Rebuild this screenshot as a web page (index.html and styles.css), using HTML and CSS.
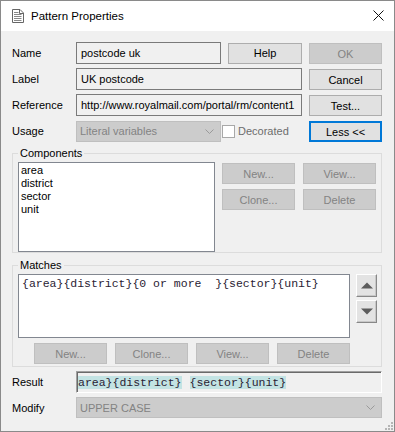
FILE: index.html
```html
<!DOCTYPE html>
<html>
<head>
<meta charset="utf-8">
<title>Pattern Properties</title>
<link rel="stylesheet" href="styles.css">
</head>
<body>
<div class="window">
  <div class="titlebar">
    <svg class="title-icon" width="12" height="14" viewBox="0 0 12 14">
      <path d="M0.5 0.5H8L11.5 4V13.5H0.5Z" fill="#fff" stroke="#666"/>
      <path d="M7.5 0.5V4.5H11.5" fill="none" stroke="#666"/>
      <path d="M2 3.5H6.5M2 5.5H9.5M2 7.5H9.5M2 9.5H9.5M2 11.5H9.5" stroke="#888"/>
    </svg>
    <span class="title">Pattern Properties</span>
    <svg class="close" width="11" height="11" viewBox="0 0 11 11">
      <path d="M0.5 0.5L10.5 10.5M10.5 0.5L0.5 10.5" stroke="#111" stroke-width="1"/>
    </svg>
  </div>

  <div class="content">
    <div class="row">
      <span class="lbl">Name</span>
      <div class="mid">
        <div class="edit name">postcode uk</div>
        <button class="btn help">Help</button>
      </div>
      <button class="btn side dis">OK</button>
    </div>
    <div class="row">
      <span class="lbl">Label</span>
      <div class="mid">
        <div class="edit">UK postcode</div>
      </div>
      <button class="btn side">Cancel</button>
    </div>
    <div class="row">
      <span class="lbl">Reference</span>
      <div class="mid">
        <div class="edit">http://www.royalmail.com/portal/rm/content1</div>
      </div>
      <button class="btn side">Test...</button>
    </div>
    <div class="row last">
      <span class="lbl">Usage</span>
      <div class="mid usage">
        <div class="combo short">
          <span class="combo-text">Literal variables</span>
          <svg class="chev" width="9" height="5" viewBox="0 0 9 5"><path d="M0.5 0.5L4.5 4.5L8.5 0.5" fill="none" stroke="#9a9a9a"/></svg>
        </div>
        <span class="chk"></span>
        <span class="chk-label">Decorated</span>
      </div>
      <button class="btn side def">Less &lt;&lt;</button>
    </div>

    <fieldset class="group components">
      <legend>Components</legend>
      <div class="comp-body">
        <div class="listbox">
          <div class="item">area</div>
          <div class="item">district</div>
          <div class="item">sector</div>
          <div class="item">unit</div>
        </div>
        <div class="comp-buttons">
          <button class="btn dis">New...</button>
          <button class="btn dis">View...</button>
          <button class="btn dis">Clone...</button>
          <button class="btn dis">Delete</button>
        </div>
      </div>
    </fieldset>

    <fieldset class="group matches">
      <legend>Matches</legend>
      <div class="match-body">
        <div class="memo">{area}{district}{0 or more  }{sector}{unit}</div>
        <div class="arrows">
          <button class="arrow"><svg width="12" height="7" viewBox="0 0 12 7"><path d="M0 6.5L6 0.5L12 6.5Z" fill="#5c5c5c"/></svg></button>
          <button class="arrow"><svg width="12" height="7" viewBox="0 0 12 7"><path d="M0 0.5L6 6.5L12 0.5Z" fill="#5c5c5c"/></svg></button>
        </div>
      </div>
      <div class="match-buttons">
        <button class="btn dis">New...</button>
        <button class="btn dis">Clone...</button>
        <button class="btn dis">View...</button>
        <button class="btn dis">Delete</button>
      </div>
    </fieldset>

    <div class="row result-row">
      <span class="lbl">Result</span>
      <div class="result">
        <div class="result-inner"><span class="hl">area}{district}</span><span class="hl second">{sector}{unit}</span></div>
      </div>
    </div>
    <div class="row modify-row">
      <span class="lbl">Modify</span>
      <div class="combo wide">
        <span class="combo-text">UPPER CASE</span>
        <svg class="chev" width="9" height="5" viewBox="0 0 9 5"><path d="M0.5 0.5L4.5 4.5L8.5 0.5" fill="none" stroke="#9a9a9a"/></svg>
      </div>
    </div>
  </div>

  <svg class="grip" width="9" height="9" viewBox="0 0 9 9">
    <rect x="7" y="1" width="2" height="2" fill="#b5b5b5"/>
    <rect x="4" y="4" width="2" height="2" fill="#b5b5b5"/>
    <rect x="7" y="4" width="2" height="2" fill="#b5b5b5"/>
    <rect x="1" y="7" width="2" height="2" fill="#b5b5b5"/>
    <rect x="4" y="7" width="2" height="2" fill="#b5b5b5"/>
    <rect x="7" y="7" width="2" height="2" fill="#b5b5b5"/>
  </svg>
</div>
</body>
</html>
```

FILE: styles.css
```css
html, body {
  margin: 0;
  padding: 0;
  background: #f0f0f0;
}

.window {
  position: relative;
  width: 395px;
  height: 432px;
  box-sizing: border-box;
  border: 1px solid #8a8a8a;
  background: #f0f0f0;
  font-family: "Liberation Sans", Arial, sans-serif;
  font-size: 11px;
  color: #000;
  overflow: hidden;
}

.titlebar {
  height: 30px;
  background: #fff;
  display: flex;
  align-items: center;
  padding-left: 11px;
}

.title-icon {
  margin-right: 7px;
  margin-top: -1px;
}

.title {
  flex: 1;
  font-size: 11.5px;
  color: #000;
}

.close {
  margin-right: 10px;
  margin-top: -1px;
}

.content {
  padding: 11px 12px 0 11px;
}

.row {
  display: flex;
  align-items: center;
  height: 22px;
  margin-bottom: 4px;
}

.row.last {
  margin-bottom: 0;
}

.lbl {
  width: 64px;
  flex: none;
}

.mid {
  width: 226px;
  flex: none;
  display: flex;
  align-items: center;
  gap: 7px;
  margin-right: 7px;
}

.edit {
  flex: 1;
  min-width: 0;
  height: 22px;
  box-sizing: border-box;
  border: 1px solid #7a7a7a;
  background: #f0f0f0;
  padding: 0 4px;
  line-height: 20px;
  white-space: nowrap;
  overflow: hidden;
}

.edit.name {
  flex: none;
  width: 145px;
}

.btn {
  width: 73px;
  height: 21px;
  box-sizing: border-box;
  border: 1px solid #adadad;
  background: #e1e1e1;
  font-family: inherit;
  font-size: 11px;
  color: #000;
  padding: 0;
  margin: 0;
  flex: none;
}

.btn.help {
  width: 74px;
}

.btn.side {
  margin-top: 1px;
}

.btn.dis {
  background: #cccccc;
  border-color: #bfbfbf;
  color: #838383;
}

.btn.def {
  border: 2px solid #0078d7;
}

.usage {
  gap: 0;
}

.combo {
  height: 21px;
  box-sizing: border-box;
  border: 1px solid #bfbfbf;
  background: #cccccc;
  display: flex;
  align-items: center;
  padding: 0 6px 0 3px;
  color: #838383;
}

.combo.short {
  width: 145px;
  flex: none;
}

.combo.wide {
  flex: 1;
}

.combo-text {
  flex: 1;
  white-space: nowrap;
}

.chk {
  width: 13px;
  height: 13px;
  box-sizing: border-box;
  border: 1px solid #a8a8a8;
  background: #fff;
  margin-left: 1px;
  flex: none;
}

.chk-label {
  margin-left: 3px;
  color: #6d6d6d;
  white-space: nowrap;
}

.group {
  margin: 4px 0 0;
  padding: 2px 5px 0 5px;
  border: 1px solid #dcdcdc;
  min-width: 0;
}

.group legend {
  padding: 0 2px;
  line-height: 14px;
}

.comp-body {
  display: flex;
  gap: 7px;
}

.listbox {
  width: 197px;
  height: 90px;
  box-sizing: border-box;
  border: 1px solid #828790;
  background: #fff;
  padding: 1px 2px;
  flex: none;
}

.item {
  line-height: 13px;
}

.comp-buttons {
  display: grid;
  grid-template-columns: 73px 73px;
  grid-auto-rows: 21px;
  column-gap: 8px;
  row-gap: 5px;
  align-content: start;
  margin-top: 1px;
}

.matches {
  margin-top: 5px;
  padding-right: 4px;
  padding-bottom: 2px;
}

.match-body {
  display: flex;
}

.memo {
  width: 332px;
  height: 64px;
  box-sizing: border-box;
  border: 1px solid #828790;
  background: #fff;
  padding: 2px 3px;
  font-family: "Liberation Mono", "Courier New", monospace;
  font-size: 11.5px;
  line-height: 14px;
  white-space: pre;
  color: #2a2233;
  flex: none;
}

.arrows {
  display: flex;
  flex-direction: column;
  gap: 3px;
  margin-left: 6px;
}

.arrow {
  width: 21px;
  height: 23px;
  box-sizing: border-box;
  padding: 0;
  margin: 0;
  background: #e3e3e3;
  border: 1px solid;
  border-color: #fff #888 #888 #fff;
  box-shadow: inset -1px -1px 0 #c8c8c8;
  display: flex;
  align-items: center;
  justify-content: center;
}

.match-buttons {
  width: 332px;
  display: flex;
  justify-content: flex-end;
  gap: 8px;
  margin-top: 5px;
}

.result-row {
  margin-top: 4px;
}

.result {
  flex: 1;
  height: 22px;
  box-sizing: border-box;
  border: 1px solid;
  border-color: #a0a0a0 #fff #fff #a0a0a0;
  box-shadow: inset 1px 1px 0 #6a6a6a;
  background: #f0f0f0;
  overflow: hidden;
  display: flex;
  align-items: center;
  padding-left: 1px;
}

.result-inner {
  white-space: pre;
  font-family: "Liberation Mono", "Courier New", monospace;
  font-size: 11.5px;
  line-height: 15px;
  color: #2a2233;
}

.hl {
  background: #c3e3e3;
}

.hl.second {
  margin-left: 8px;
}

.modify-row {
  height: 21px;
}

.grip {
  position: absolute;
  right: 1px;
  bottom: 1px;
}
```
